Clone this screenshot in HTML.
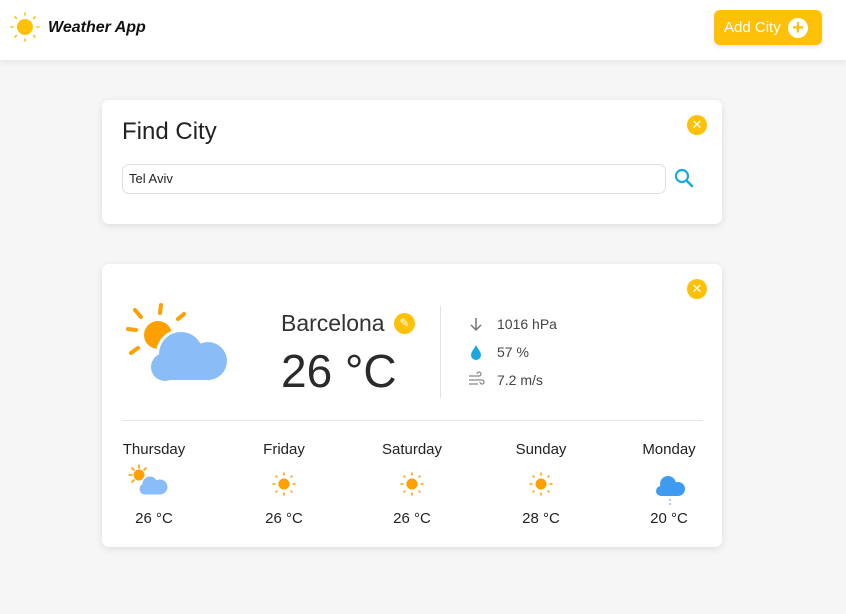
<!DOCTYPE html>
<html><head><meta charset="utf-8"><style>
*{margin:0;padding:0;box-sizing:border-box}
body{width:846px;height:614px;background:#f6f6f6;font-family:"Liberation Sans",sans-serif;position:relative;overflow:hidden;color:#222}
.hdr{position:absolute;left:0;top:0;width:846px;height:60px;background:#fff;box-shadow:0 2px 6px rgba(0,0,0,.08)}
.abs{position:absolute}
.card{position:absolute;left:102px;width:620px;background:#fff;border-radius:7px;box-shadow:0 2px 8px rgba(0,0,0,.1)}
.x{position:absolute;width:20px;height:20px;border-radius:50%;background:#ffc107;color:#fff;font-size:13px;line-height:20px;text-align:center}
.day{position:absolute;width:120px;text-align:center;font-size:15px;color:#222}
</style></head><body>
<div class="hdr">
<svg class="abs" style="left:9px;top:11px" width="32" height="32" viewBox="0 0 32 32">
<circle cx="16" cy="16" r="8" fill="#ffc107"/>
<g stroke="#ffc107" stroke-width="1.6" stroke-linecap="round">
<line x1="16" y1="2" x2="16" y2="4"/><line x1="16" y1="28" x2="16" y2="30"/><line x1="2" y1="16" x2="4" y2="16"/><line x1="28" y1="16" x2="30" y2="16"/>
<line x1="6" y1="6" x2="7.4" y2="7.4"/><line x1="24.6" y1="24.6" x2="26" y2="26"/><line x1="6" y1="26" x2="7.4" y2="24.6"/><line x1="24.6" y1="7.4" x2="26" y2="6"/>
</g></svg>
<div class="abs" style="left:48px;top:19px;font-size:16px;font-weight:bold;font-style:italic;color:#111">Weather App</div>
<div class="abs" style="left:714px;top:10px;width:108px;height:35px;background:#ffc107;border-radius:6px;color:#fff;font-size:15px;line-height:35px;padding-left:10px;box-shadow:0 2px 4px rgba(0,0,0,.1)">Add City
<span class="abs" style="left:74px;top:8px;width:20px;height:20px;border-radius:50%;background:#fff;color:#ffc107;font-size:20px;line-height:20px;text-align:center;font-weight:bold">+</span></div>
</div>

<div class="card" style="top:100px;height:124px">
<div class="abs" style="left:20px;top:18px;font-size:24px;color:#222">Find City</div>
<div class="x" style="left:585px;top:15px">✕</div>
<div class="abs" style="left:20px;top:64px;width:544px;height:30px;border:1px solid #e0e0e0;border-radius:7px;font-size:13px;line-height:28px;padding-left:6px;color:#222">Tel Aviv</div>
<svg class="abs" style="left:571px;top:67px" width="22" height="22" viewBox="0 0 22 22"><circle cx="9" cy="9" r="6" fill="none" stroke="#1ba8e0" stroke-width="2.2"/><line x1="13.5" y1="13.5" x2="19" y2="19" stroke="#1ba8e0" stroke-width="2.6" stroke-linecap="round"/></svg>
</div>

<div class="card" style="top:264px;height:283px">
<div class="x" style="left:585px;top:15px">✕</div>
<svg class="abs" style="left:22px;top:38px" width="110" height="90" viewBox="0 0 110 90">
<g stroke="#ffa000" stroke-width="4" stroke-linecap="round">
<line x1="37" y1="3" x2="36" y2="11"/><line x1="11" y1="8" x2="17" y2="15"/><line x1="4" y1="27" x2="12" y2="28"/><line x1="7" y1="51" x2="14" y2="46"/><line x1="60" y1="12" x2="54" y2="17"/>
</g>
<circle cx="34" cy="33" r="14" fill="#ffa000"/>
<g fill="#fff"><circle cx="57" cy="52" r="25"/><circle cx="84" cy="59" r="22"/><circle cx="41" cy="65" r="17"/><rect x="41" y="54" width="45" height="27"/></g>
<g fill="#8abdf7"><circle cx="57" cy="52" r="22"/><circle cx="84" cy="59" r="19"/><circle cx="41" cy="65" r="14"/><rect x="41" y="56" width="45" height="22"/></g>
</svg>
<div class="abs" style="left:179px;top:46px;font-size:23px;color:#333">Barcelona</div>
<div class="abs" style="left:292px;top:49px;width:21px;height:21px;border-radius:50%;background:#ffc107;color:#fff;font-size:12px;line-height:21px;text-align:center">✎</div>
<div class="abs" style="left:179px;top:80px;font-size:46px;color:#2a2a2a">26 °C</div>
<div class="abs" style="left:338px;top:42px;width:1px;height:92px;background:#e3e3e3"></div>
<svg class="abs" style="left:366px;top:52px" width="16" height="16" viewBox="0 0 16 16"><path d="M8 2v12M3 9l5 5 5-5" fill="none" stroke="#777" stroke-width="1.5"/></svg>
<svg class="abs" style="left:367px;top:80px" width="14" height="16" viewBox="0 0 14 16"><path d="M7 1C5 5 2 8 2 11a5 5 0 0 0 10 0c0-3-3-6-5-10z" fill="#1ba8e0"/></svg>
<svg class="abs" style="left:365px;top:107px" width="18" height="18" viewBox="0 0 18 18"><path d="M2 5h10a2 2 0 1 0-2-2M2 9h13a2 2 0 1 1-2 2M2 13h9" fill="none" stroke="#888" stroke-width="1.3"/></svg>
<div class="abs" style="left:395px;top:52px;font-size:14px;color:#444">1016 hPa</div>
<div class="abs" style="left:395px;top:80px;font-size:14px;color:#444">57 %</div>
<div class="abs" style="left:395px;top:108px;font-size:14px;color:#444">7.2 m/s</div>
<div class="abs" style="left:20px;top:156px;width:581px;height:1px;background:#e6e6e6"></div>
</div>

<div class="day" style="left:94px;top:441px">Thursday</div>
<div class="day" style="left:224px;top:441px">Friday</div>
<div class="day" style="left:352px;top:441px">Saturday</div>
<div class="day" style="left:481px;top:441px">Sunday</div>
<div class="day" style="left:609px;top:441px">Monday</div>

<svg class="abs" style="left:128px;top:464px" width="44" height="34" viewBox="0 0 44 34">
<g stroke="#ffa000" stroke-width="1.6" stroke-linecap="round"><line x1="11" y1="1" x2="11" y2="4"/><line x1="1" y1="11" x2="4" y2="11"/><line x1="4" y1="4" x2="6" y2="6"/><line x1="18" y1="4" x2="16" y2="6"/><line x1="4" y1="18" x2="6" y2="16"/></g>
<circle cx="11" cy="11" r="5.5" fill="#ffa000"/>
<g fill="#fff"><circle cx="22" cy="20" r="9"/><circle cx="32" cy="23" r="9"/><circle cx="17" cy="25" r="7"/></g>
<g fill="#8abdf7"><circle cx="22" cy="20" r="7.5"/><circle cx="32" cy="23" r="7.5"/><circle cx="17" cy="25" r="5.5"/><rect x="17" y="22" width="15" height="8.5"/></g>
</svg>
<svg class="abs" style="left:271px;top:471px" width="26" height="26" viewBox="0 0 26 26"><circle cx="13" cy="13" r="5.5" fill="#ffa000"/><g stroke="#ffa000" stroke-width="1.5" stroke-linecap="round"><line x1="13" y1="2" x2="13" y2="4"/><line x1="13" y1="22" x2="13" y2="24"/><line x1="2" y1="13" x2="4" y2="13"/><line x1="22" y1="13" x2="24" y2="13"/><line x1="5" y1="5" x2="6" y2="6"/><line x1="20" y1="20" x2="21" y2="21"/><line x1="5" y1="21" x2="6" y2="20"/><line x1="20" y1="6" x2="21" y2="5"/></g></svg>
<svg class="abs" style="left:399px;top:471px" width="26" height="26" viewBox="0 0 26 26"><circle cx="13" cy="13" r="5.5" fill="#ffa000"/><g stroke="#ffa000" stroke-width="1.5" stroke-linecap="round"><line x1="13" y1="2" x2="13" y2="4"/><line x1="13" y1="22" x2="13" y2="24"/><line x1="2" y1="13" x2="4" y2="13"/><line x1="22" y1="13" x2="24" y2="13"/><line x1="5" y1="5" x2="6" y2="6"/><line x1="20" y1="20" x2="21" y2="21"/><line x1="5" y1="21" x2="6" y2="20"/><line x1="20" y1="6" x2="21" y2="5"/></g></svg>
<svg class="abs" style="left:528px;top:471px" width="26" height="26" viewBox="0 0 26 26"><circle cx="13" cy="13" r="5.5" fill="#ffa000"/><g stroke="#ffa000" stroke-width="1.5" stroke-linecap="round"><line x1="13" y1="2" x2="13" y2="4"/><line x1="13" y1="22" x2="13" y2="24"/><line x1="2" y1="13" x2="4" y2="13"/><line x1="22" y1="13" x2="24" y2="13"/><line x1="5" y1="5" x2="6" y2="6"/><line x1="20" y1="20" x2="21" y2="21"/><line x1="5" y1="21" x2="6" y2="20"/><line x1="20" y1="6" x2="21" y2="5"/></g></svg>
<svg class="abs" style="left:652px;top:472px" width="36" height="34" viewBox="0 0 36 34">
<g fill="#3f9bef"><circle cx="16" cy="12" r="8"/><circle cx="26" cy="17" r="7"/><circle cx="9" cy="19" r="5"/><rect x="9" y="16" width="17" height="8"/></g>
<line x1="18" y1="27" x2="18" y2="33" stroke="#8abdf7" stroke-width="1.5" stroke-dasharray="2 2"/>
</svg>

<div class="day" style="left:94px;top:510px">26 °C</div>
<div class="day" style="left:224px;top:510px">26 °C</div>
<div class="day" style="left:352px;top:510px">26 °C</div>
<div class="day" style="left:481px;top:510px">28 °C</div>
<div class="day" style="left:609px;top:510px">20 °C</div>
</body></html>
